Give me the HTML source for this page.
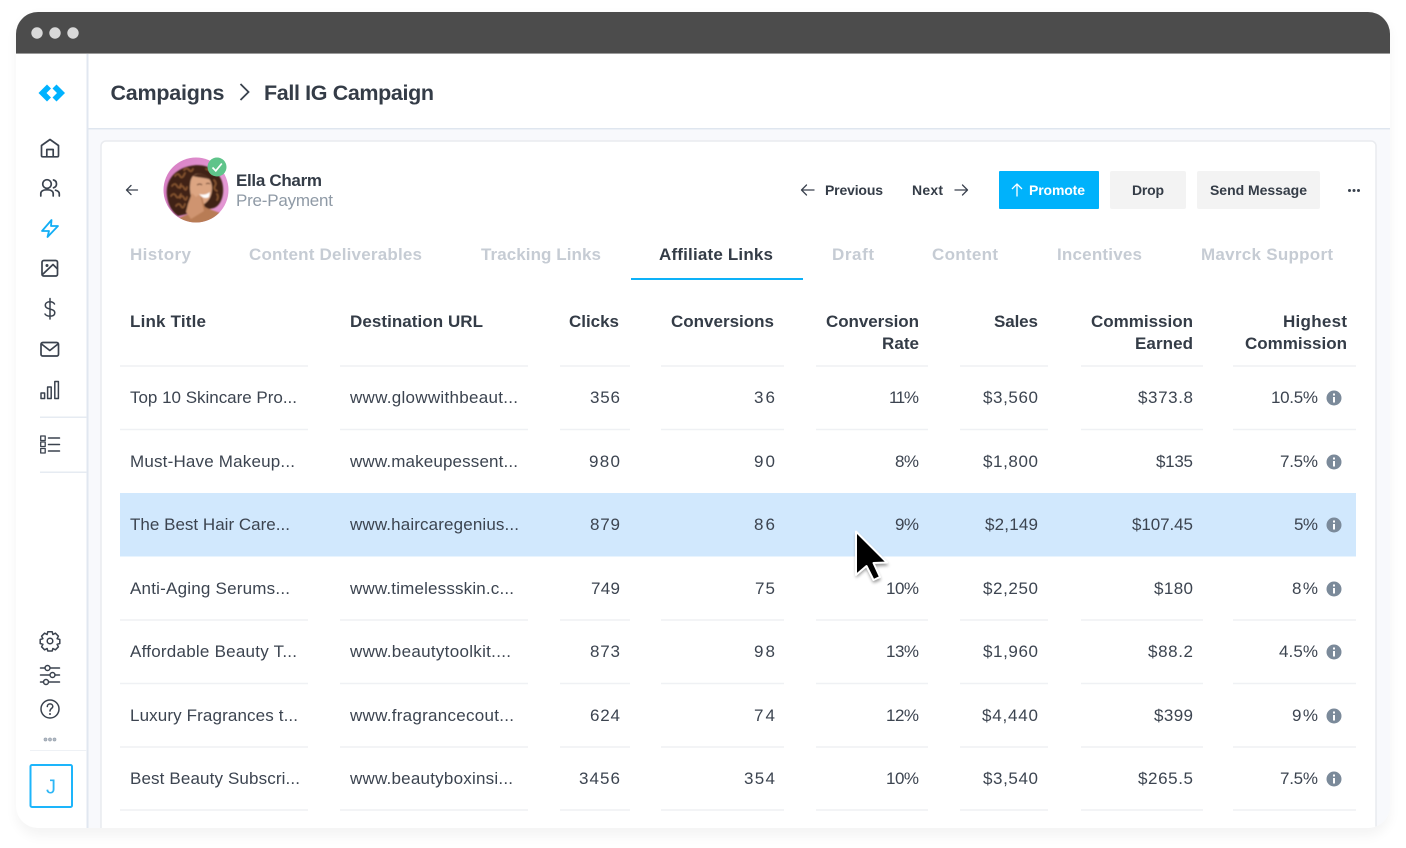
<!DOCTYPE html>
<html><head><meta charset="utf-8"><style>
html,body{margin:0;padding:0;background:#fff;width:1406px;height:848px;overflow:hidden}
svg{display:block}
text{font-family:"Liberation Sans",Arial,sans-serif;font-size:17px;fill:#3c4450}
.h{font-weight:700;fill:#343c47;font-size:17px}
.t{font-weight:700;fill:#c6ccd4;font-size:17px}
.e{text-anchor:end}
.ic{fill:none;stroke:#3a424e;stroke-width:1.7;stroke-linecap:round;stroke-linejoin:round}
.l{stroke:#eff1f4;stroke-width:1.5}
.b{font-weight:700;font-size:14px;fill:#343c47}
</style></head><body>
<svg width="1406" height="848" viewBox="0 0 1406 848" xmlns="http://www.w3.org/2000/svg">
<defs>
<clipPath id="w"><rect x="16" y="12" width="1374" height="816" rx="22"/></clipPath>
<clipPath id="av"><circle cx="196" cy="190" r="32.5"/></clipPath>
<filter id="sh" x="-5%" y="-5%" width="110%" height="110%"><feGaussianBlur stdDeviation="6"/></filter>
<filter id="cs" x="-40%" y="-40%" width="180%" height="180%"><feGaussianBlur stdDeviation="1.5"/></filter>
<filter id="hb" x="-10%" y="-10%" width="120%" height="120%"><feGaussianBlur stdDeviation="0.7"/></filter>
<radialGradient id="pk" cx=".7" cy=".5" r=".7"><stop offset="0" stop-color="#eba6dc"/><stop offset="1" stop-color="#d77fc4"/></radialGradient>
</defs>
<rect x="16" y="16" width="1374" height="820" rx="24" fill="#000" opacity=".045" filter="url(#sh)"/>
<g clip-path="url(#w)">
<rect x="16" y="12" width="1374" height="816" fill="#fff"/>
<rect x="16" y="12" width="1374" height="41" fill="#4c4c4c"/>
<rect x="16" y="53" width="1374" height="1" fill="#9a9a9a"/>
<circle cx="37" cy="33" r="5.7" fill="#d9d9d9"/><circle cx="55" cy="33" r="5.7" fill="#d9d9d9"/><circle cx="73" cy="33" r="5.7" fill="#d9d9d9"/>
<rect x="88" y="129" width="1302" height="700" fill="#f8f9fc"/>
<rect x="87" y="128" width="1303" height="1.5" fill="#dfe6ef"/>
<rect x="86.5" y="54" width="2" height="775" fill="#e1e7f0"/>
<rect x="101" y="141" width="1275" height="700" rx="5" fill="#fff" stroke="#e9ebef" stroke-width="1.5"/>
</g>
<polygon fill="#00b2ff" points="38.5,93 47,84.5 51,88.5 46.5,93 51,97.5 47,101.5"/>
<polygon fill="#00b2ff" points="65,93 56.5,84.5 52.5,88.5 57,93 52.5,97.5 56.5,101.5"/>
<path class="ic" d="M41.500 155.500V145.500L50 139.500L58.500 145.500V155.500C58.500 156.300 58 156.800 57.200 156.800H42.800C42 156.800 41.500 156.300 41.500 155.500Z"/>
<path class="ic" d="M46.800 156.500V149.500H53.200V156.500"/>
<circle class="ic" cx="47" cy="184" r="4.300"/>
<path class="ic" d="M40.800 196V193.500C40.800 191.300 43 189.800 47 189.800C51 189.800 53.200 191.300 53.200 193.500V196"/>
<path class="ic" d="M53.500 180C55.500 180.500 56.500 182 56.500 184C56.500 186 55.500 187.200 53.500 187.800M55.500 190.200C58 190.800 59.300 192 59.300 194V196"/>
<path d="M51.500 220L42 231H49L47.500 237L58 226H51Z" fill="none" stroke="#12aef5" stroke-width="1.800" stroke-linejoin="round"/>
<rect class="ic" x="42" y="260.500" width="15.500" height="15.500" rx="1.800"/>
<circle cx="47" cy="265.500" r="1.500" fill="#3a424e"/>
<path class="ic" d="M42.500 274.500L53 264.500L57.300 268.800"/>
<path class="ic" style="stroke-width:1.500" d="M54.500 304C53.500 302.500 52 301.800 50 301.800C47.300 301.800 45.300 303 45.300 305.300C45.300 310.300 54.800 307.800 54.800 312.800C54.800 315.200 52.700 316.200 50 316.200C47.700 316.200 46 315.500 45 314M50 298.500V319"/>
<rect class="ic" x="41" y="342.500" width="17.500" height="13.500" rx="1.800"/>
<path class="ic" d="M41.500 344L49.800 350.500L58 344"/>
<rect class="ic" style="stroke-width:1.500" x="41" y="393" width="3.600" height="5.500"/><rect class="ic" style="stroke-width:1.500" x="47.600" y="387" width="3.600" height="11.500"/><rect class="ic" style="stroke-width:1.500" x="54.800" y="381.500" width="3.600" height="17"/>
<rect x="40" y="416.500" width="47" height="1.500" fill="#e6ebf2"/>
<rect class="ic" style="stroke-width:1.300" x="40.700" y="436" width="4.500" height="4.500"/><rect class="ic" style="stroke-width:1.300" x="40.700" y="442" width="4.500" height="4.500"/><rect class="ic" style="stroke-width:1.300" x="40.700" y="448.500" width="4.500" height="4.500"/>
<path class="ic" style="stroke-width:1.500" d="M48.500 438H59.500M48.500 444.500H59.500M48.500 451H59.500"/>
<rect x="40" y="471.500" width="47" height="1.500" fill="#e6ebf2"/>
<path class="ic" style="stroke-width:1.500" d="M47.800 631.800H52.200L52.900 634.500L55.400 633.200L58.400 636.200L57.100 638.700L59.800 639.500V643.500L57.100 644.300L58.400 646.800L55.400 649.800L52.900 648.500L52.200 651H47.800L47.100 648.500L44.600 649.800L41.600 646.800L42.900 644.300L40.200 643.500V639.500L42.900 638.700L41.600 636.200L44.600 633.200L47.100 634.500Z"/>
<circle class="ic" style="stroke-width:1.500" cx="50" cy="641" r="2.800"/>
<path class="ic" style="stroke-width:1.500" d="M40.500 668H45M50.500 668H59.500M40.500 675H49M55 675H59.500M40.500 682H43.500M49.500 682H59.500"/>
<circle class="ic" style="stroke-width:1.500" cx="47.500" cy="668" r="2.500"/><circle class="ic" style="stroke-width:1.500" cx="52.500" cy="675" r="2.500"/><circle class="ic" style="stroke-width:1.500" cx="46" cy="682" r="2.500"/>
<circle class="ic" style="stroke-width:1.500" cx="50" cy="709" r="9"/>
<path class="ic" style="stroke-width:1.500" d="M47.300 706.500C47.300 703 52.800 703 52.800 706.500C52.800 708.500 50 708.500 50 711"/><circle cx="50" cy="714" r="1" fill="#3a424e"/>
<circle cx="45.500" cy="739.500" r="1.500" fill="#b5bcc6" stroke="#98a2ae" stroke-width=".7"/><circle cx="50" cy="739.500" r="1.500" fill="#b5bcc6" stroke="#98a2ae" stroke-width=".7"/><circle cx="54.500" cy="739.500" r="1.500" fill="#b5bcc6" stroke="#98a2ae" stroke-width=".7"/>
<rect x="30" y="750" width="57" height="1" fill="#eef1f5"/>
<rect x="30.500" y="765" width="41.500" height="42" rx="1.500" fill="#fff" stroke="#1db5fb" stroke-width="2"/>
<text x="51" y="793.500" text-anchor="middle" style="font-size:20px;fill:#2cb6f6">J</text>
<text x="110.500" y="100" style="font-size:21.500px;font-weight:700;fill:#343c47" textLength="114">Campaigns</text>
<path d="M240.500 84L248.500 92L240.500 100" fill="none" stroke="#3a424e" stroke-width="1.800"/>
<text x="264" y="100" style="font-size:21.500px;font-weight:700;fill:#343c47" textLength="170">Fall IG Campaign</text>
<path class="ic" style="stroke-width:1.300" d="M137.500 190H126.500M131 185.500L126.500 190L131 194.500"/>
<g clip-path="url(#av)">
<rect x="163" y="157" width="66" height="66" fill="url(#pk)"/>
<g filter="url(#hb)">
<path d="M167 196C165 180 175 169 190 166C207 162 222 172 223 187C224 197 220 206 214 208L178 216C172 212 168 205 167 196Z" fill="#3f2215"/>
<g fill="none" stroke="#8a5630" stroke-width="1.600" stroke-linecap="round">
<path d="M172 186q3 -4 5 0t4 -2"/><path d="M171 196q3 -4 5 0t5 -2"/><path d="M175 176q3 -4 5 0t5 -3"/><path d="M184 170q3 -3 5 0t4 -1"/><path d="M176 206q3 -4 5 0t4 -2"/><path d="M180 188q2 -4 4 0t3 -1"/><path d="M180 198q2 -4 4 0t3 -1"/><path d="M214 180q3 3 1 6t2 5"/><path d="M217 194q2 3 0 6"/><path d="M206 169q4 1 6 5"/>
</g>
<path d="M196 174C205 172 212 179 212 188C212 197 207 204 201 205C194 206 190 197 190 188C190 181 191 176 196 174Z" fill="#dca582"/>
<path d="M193 176C198 172 206 173 211 180C204 177 198 178 193 176Z" fill="#4b2a1a"/>
<path d="M199 196C203 194 203 203 205 207C210 210 220 212 228 217L228 228H168C172 220 183 216 189 214L191 206Z" fill="#b87c55"/>
<path d="M188 204L192 193L196 197L200 194L204 211L191 219L186 212Z" fill="#cf9470"/>
<path d="M199 194Q205 196 210 192L209 197Q204 200 199 194Z" fill="#fff"/>
<path d="M197 185q3 -2 5 0M206 184q2 -1.500 4 0" fill="none" stroke="#5a3420" stroke-width="1"/>
</g>
</g>
<circle cx="217" cy="167" r="9.500" fill="#5fc48a"/>
<path d="M212.500 167.500L215.800 170.800L221.800 163.500" fill="none" stroke="#fff" stroke-width="1.700"/>
<text x="236" y="186" style="font-weight:700;fill:#343c47" textLength="86">Ella Charm</text>
<text x="236" y="206" style="fill:#8f9aa6" textLength="97">Pre-Payment</text>
<path class="ic" style="stroke-width:1.300" d="M814 190H801.500M806.500 185L801.500 190L806.500 195"/>
<text class="b" x="825" y="195" textLength="58">Previous</text>
<text class="b" x="912" y="195" textLength="31">Next</text>
<path class="ic" style="stroke-width:1.300" d="M955 190H967.500M962.500 185L967.500 190L962.500 195"/>
<rect x="999" y="171" width="100" height="38" rx="1" fill="#00b2fb"/>
<path d="M1017 196.500V184M1012 189L1017 184L1022 189" fill="none" stroke="#fff" stroke-width="1.300"/>
<text class="b" x="1029" y="195" style="fill:#fff" textLength="56">Promote</text>
<rect x="1110" y="171" width="76" height="38" rx="2" fill="#f3f3f3"/>
<text class="b" x="1132" y="195" textLength="32">Drop</text>
<rect x="1197" y="171" width="123" height="38" rx="2" fill="#f3f3f3"/>
<text class="b" x="1210" y="195" textLength="97">Send Message</text>
<circle cx="1349.500" cy="190.500" r="1.500" fill="#3a424e"/><circle cx="1354" cy="190.500" r="1.500" fill="#3a424e"/><circle cx="1358.500" cy="190.500" r="1.500" fill="#3a424e"/>
<text class="t" x="130" y="260" textLength="61">History</text>
<text class="t" x="249" y="260" textLength="173">Content Deliverables</text>
<text class="t" x="481" y="260" textLength="120">Tracking Links</text>
<text class="h" x="659" y="260" textLength="114">Affiliate Links</text>
<text class="t" x="832" y="260" textLength="42">Draft</text>
<text class="t" x="932" y="260" textLength="66">Content</text>
<text class="t" x="1057" y="260" textLength="85">Incentives</text>
<text class="t" x="1201" y="260" textLength="132">Mavrck Support</text>
<rect x="631" y="278" width="172" height="2" fill="#0db1f8"/>
<text class="h" x="130" y="327" textLength="76">Link Title</text>
<text class="h" x="350" y="327" textLength="133">Destination URL</text>
<text class="h e" x="619" y="327" textLength="50">Clicks</text>
<text class="h e" x="774" y="327" textLength="103">Conversions</text>
<text class="h e" x="919" y="327" textLength="93">Conversion</text>
<text class="h e" x="919" y="349" textLength="37">Rate</text>
<text class="h e" x="1038" y="327" textLength="44">Sales</text>
<text class="h e" x="1193" y="327" textLength="102">Commission</text>
<text class="h e" x="1193" y="349" textLength="58">Earned</text>
<text class="h e" x="1347" y="327" textLength="64">Highest</text>
<text class="h e" x="1347" y="349" textLength="102">Commission</text>
<rect x="120" y="493" width="1236" height="63.500" fill="#d1e8fd"/>
<g class="l">
<path d="M120 366H308M340 366H528M560 366H630M661 366H784M816 366H928M960 366H1048M1081 366H1203M1233 366H1356"/>
<path d="M120 429.500H308M340 429.500H528M560 429.500H630M661 429.500H784M816 429.500H928M960 429.500H1048M1081 429.500H1203M1233 429.500H1356"/>
<path d="M120 620H308M340 620H528M560 620H630M661 620H784M816 620H928M960 620H1048M1081 620H1203M1233 620H1356"/>
<path d="M120 683.500H308M340 683.500H528M560 683.500H630M661 683.500H784M816 683.500H928M960 683.500H1048M1081 683.500H1203M1233 683.500H1356"/>
<path d="M120 747H308M340 747H528M560 747H630M661 747H784M816 747H928M960 747H1048M1081 747H1203M1233 747H1356"/>
<path d="M120 810H308M340 810H528M560 810H630M661 810H784M816 810H928M960 810H1048M1081 810H1203M1233 810H1356"/>
</g>
<text x="130" y="403" textLength="167">Top 10 Skincare Pro...</text><text x="350" y="403" textLength="168">www.glowwithbeaut...</text><text class="e" x="620" y="403" textLength="30">356</text><text class="e" x="775" y="403" textLength="21">36</text><text class="e" x="919" y="403" textLength="30">11%</text><text class="e" x="1038" y="403" textLength="55">$3,560</text><text class="e" x="1193" y="403" textLength="55">$373.8</text><text class="e" x="1318" y="403" textLength="47">10.5%</text>
<text x="130" y="467" textLength="165">Must-Have Makeup...</text><text x="350" y="467" textLength="168">www.makeupessent...</text><text class="e" x="620" y="467" textLength="31">980</text><text class="e" x="775" y="467" textLength="21">90</text><text class="e" x="919" y="467" textLength="24">8%</text><text class="e" x="1038" y="467" textLength="55">$1,800</text><text class="e" x="1193" y="467" textLength="37">$135</text><text class="e" x="1318" y="467" textLength="38">7.5%</text>
<text x="130" y="530" textLength="160">The Best Hair Care...</text><text x="350" y="530" textLength="169">www.haircaregenius...</text><text class="e" x="620" y="530" textLength="30">879</text><text class="e" x="775" y="530" textLength="21">86</text><text class="e" x="919" y="530" textLength="24">9%</text><text class="e" x="1038" y="530" textLength="53">$2,149</text><text class="e" x="1193" y="530" textLength="61">$107.45</text><text class="e" x="1318" y="530" textLength="24">5%</text>
<text x="130" y="594" textLength="160">Anti-Aging Serums...</text><text x="350" y="594" textLength="164">www.timelessskin.c...</text><text class="e" x="620" y="594" textLength="29">749</text><text class="e" x="775" y="594" textLength="20">75</text><text class="e" x="919" y="594" textLength="33">10%</text><text class="e" x="1038" y="594" textLength="55">$2,250</text><text class="e" x="1193" y="594" textLength="39">$180</text><text class="e" x="1318" y="594" textLength="26">8%</text>
<text x="130" y="657" textLength="167">Affordable Beauty T...</text><text x="350" y="657" textLength="161">www.beautytoolkit....</text><text class="e" x="620" y="657" textLength="30">873</text><text class="e" x="775" y="657" textLength="21">98</text><text class="e" x="919" y="657" textLength="33">13%</text><text class="e" x="1038" y="657" textLength="55">$1,960</text><text class="e" x="1193" y="657" textLength="45">$88.2</text><text class="e" x="1318" y="657" textLength="39">4.5%</text>
<text x="130" y="721" textLength="168">Luxury Fragrances t...</text><text x="350" y="721" textLength="164">www.fragrancecout...</text><text class="e" x="620" y="721" textLength="30">624</text><text class="e" x="775" y="721" textLength="21">74</text><text class="e" x="919" y="721" textLength="33">12%</text><text class="e" x="1038" y="721" textLength="56">$4,440</text><text class="e" x="1193" y="721" textLength="39">$399</text><text class="e" x="1318" y="721" textLength="26">9%</text>
<text x="130" y="784" textLength="170">Best Beauty Subscri...</text><text x="350" y="784" textLength="163">www.beautyboxinsi...</text><text class="e" x="620" y="784" textLength="41">3456</text><text class="e" x="775" y="784" textLength="31">354</text><text class="e" x="919" y="784" textLength="33">10%</text><text class="e" x="1038" y="784" textLength="55">$3,540</text><text class="e" x="1193" y="784" textLength="55">$265.5</text><text class="e" x="1318" y="784" textLength="38">7.5%</text>
<g fill="#7b8a9a"><circle cx="1334" cy="398" r="7.500"/><circle cx="1334" cy="462" r="7.500"/><circle cx="1334" cy="525" r="7.500"/><circle cx="1334" cy="589" r="7.500"/><circle cx="1334" cy="652" r="7.500"/><circle cx="1334" cy="716" r="7.500"/><circle cx="1334" cy="779" r="7.500"/></g>
<g fill="#fff">
<rect x="1333" y="397" width="2" height="5.500"/><rect x="1333" y="393.500" width="2" height="2"/>
<rect x="1333" y="461" width="2" height="5.500"/><rect x="1333" y="457.500" width="2" height="2"/>
<rect x="1333" y="524" width="2" height="5.500"/><rect x="1333" y="520.500" width="2" height="2"/>
<rect x="1333" y="588" width="2" height="5.500"/><rect x="1333" y="584.500" width="2" height="2"/>
<rect x="1333" y="651" width="2" height="5.500"/><rect x="1333" y="647.500" width="2" height="2"/>
<rect x="1333" y="715" width="2" height="5.500"/><rect x="1333" y="711.500" width="2" height="2"/>
<rect x="1333" y="778" width="2" height="5.500"/><rect x="1333" y="774.500" width="2" height="2"/>
</g>
<path d="M856 531V576L866.500 567L873.500 581L881 578L874.500 564.500L889 563.500Z" fill="#000" opacity=".4" filter="url(#cs)" transform="translate(0 2)"/>
<path d="M856 531.500V575L866.500 566L873.500 580L880 577L873.500 563L887 562.500Z" fill="#000" stroke="#fff" stroke-width="2" stroke-linejoin="round"/>
</svg>
</body></html>
